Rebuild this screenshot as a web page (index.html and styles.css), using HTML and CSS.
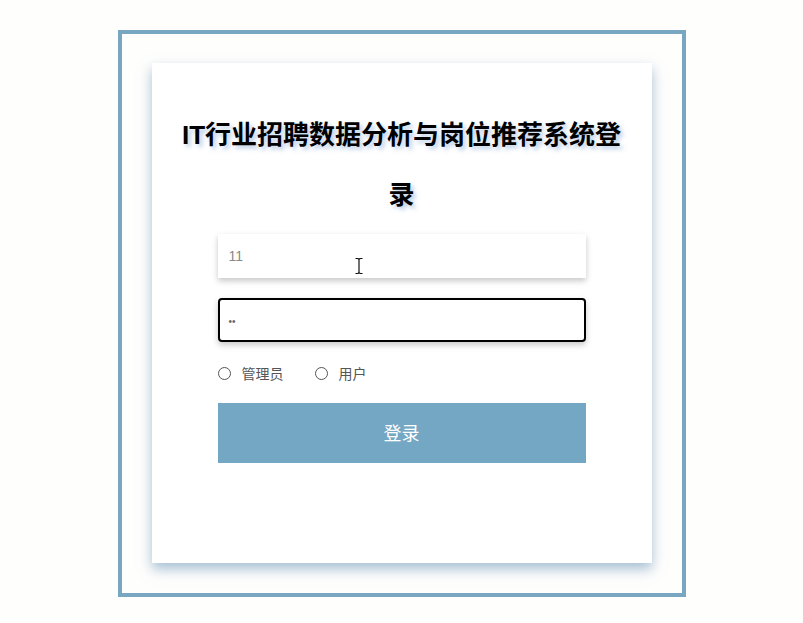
FILE: index.html
```html
<!DOCTYPE html>
<html lang="zh">
<head>
<meta charset="utf-8">
<title>登录</title>
<link rel="stylesheet" href="styles.css">
</head>
<body>
<div class="frame">
  <div class="card">
    <h2 class="title">IT行业招聘数据分析与岗位推荐系统登录</h2>
    <form class="form">
      <div class="field">
        <div class="input">11</div>
        <svg class="cursor" width="10" height="18" viewBox="0 0 10 18"><path d="M1.5 1.5h2.5M6 1.5h2.5M5 2v14M1.5 16.5h2.5M6 16.5h2.5M4 1.5l1 1 1-1M4 16.5l1-1 1 1" stroke="#111" stroke-width="1.2" fill="none"/></svg>
      </div>
      <div class="input focused"><span class="dots">••</span></div>
      <div class="roles">
        <label class="role"><span class="radio"></span>管理员</label>
        <label class="role"><span class="radio"></span>用户</label>
      </div>
      <div class="btn">登录</div>
    </form>
  </div>
</div>
</body>
</html>
```
FILE: styles.css
```css
html, body {
  margin: 0;
  padding: 0;
  background: #fefefc;
  font-family: "Liberation Sans", "Noto Sans CJK SC", sans-serif;
}
.frame {
  width: 500px;
  margin: 30px auto 0;
  padding: 29px 30px 30px;
  border: 4px solid #79a6c0;
  background: #fefefd;
}
.card {
  width: 500px;
  height: 500px;
  background: #fff;
  box-shadow: 0 6px 12px rgba(80, 130, 170, 0.5);
  box-sizing: border-box;
  padding-top: 42px;
}
.title {
  margin: 0 auto;
  width: 456px;
  text-align: center;
  font-size: 26px;
  line-height: 60px;
  font-weight: bold;
  color: #000;
  text-shadow: 3px 3px 4px rgba(120, 160, 210, 0.5);
}
.form {
  width: 368px;
  margin: 9px auto 0;
  display: flex;
  flex-direction: column;
}
.field {
  position: relative;
}
.input {
  height: 44px;
  box-sizing: border-box;
  padding-left: 11px;
  display: flex;
  align-items: center;
  font-size: 14px;
  color: #888;
  background: #fff;
  box-shadow: 0 3px 6px rgba(0, 0, 0, 0.22);
}
.focused {
  margin-top: 20px;
  border: 2px solid #000;
  border-radius: 4px;
  padding-left: 9px;
}
.dots {
  font-size: 10px;
  color: #666;
  padding-top: 2px;
}
.cursor {
  position: absolute;
  left: 136px;
  top: 23px;
}
.roles {
  display: flex;
  align-items: center;
  gap: 31px;
  margin-top: 23px;
  height: 16px;
}
.role {
  display: flex;
  align-items: center;
  font-size: 14px;
  color: #555;
}
.radio {
  width: 11px;
  height: 11px;
  border: 1px solid #555;
  border-radius: 50%;
  margin-right: 11px;
}
.btn {
  margin-top: 22px;
  height: 60px;
  background: #74a7c4;
  color: #fff;
  font-size: 18px;
  display: flex;
  align-items: center;
  justify-content: center;
  padding-bottom: 3px;
  box-sizing: border-box;
}
```
